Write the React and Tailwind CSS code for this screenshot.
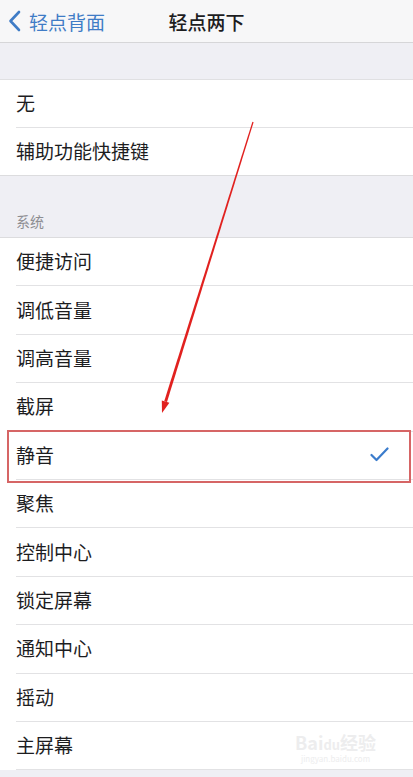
const first = ['无', '辅助功能快捷键'];
const system = ['便捷访问', '调低音量', '调高音量', '截屏', '静音', '聚焦', '控制中心', '锁定屏幕', '通知中心', '摇动', '主屏幕'];

const Row = ({ label, last, h, selected }) => (
    <div className={`relative pl-4 ${h}`}>
        <div className={`flex items-center h-full pr-6 pb-[2px] ${last ? '' : 'border-b border-[#e2e2e4]'}`}>
            <span className="text-[19px] text-[#1d1d1f] flex-1 leading-none">{label}</span>
            {selected && (
                <svg width="19" height="15" viewBox="0 0 19 15">
                    <path d="M1.5 8 L6.5 13 L17.5 1.5" fill="none" stroke="#3b7ccc" strokeWidth="2.2" strokeLinecap="round" strokeLinejoin="round" />
                </svg>
            )}
        </div>
        {selected && (
            <div className="absolute left-[7px] right-[2px] top-[-2px] bottom-[-3px] border-2 border-[#d66565]"></div>
        )}
    </div>
);

export default function App() {
    return (
        <div className="relative w-[413px] h-[777px] overflow-hidden bg-[#efeff4] font-['Noto_Sans_CJK_SC',sans-serif]">
            <div className="h-[43px] bg-[#f7f7f8] border-b border-[#d6d6d8] grid grid-cols-[1fr_auto_1fr] items-center">
                <div className="flex items-center pl-[8px] gap-[8px] text-[#3f7cc6]">
                    <svg width="13" height="22" viewBox="0 0 13 22">
                        <path d="M11 2 L2.5 11 L11 20" fill="none" stroke="#3f7cc6" strokeWidth="2.6" strokeLinecap="round" strokeLinejoin="round" />
                    </svg>
                    <span className="text-[19px] leading-none">轻点背面</span>
                </div>
                <h1 className="text-[19px] font-medium text-[#1d1d1f] leading-none">轻点两下</h1>
                <div></div>
            </div>

            <div className="h-[36px]"></div>

            <div className="bg-white border-t border-[#e0e0e2]">
                {first.map((t, i) => (
                    <Row key={t} label={t} h="h-[47.5px]" last={i === first.length - 1} />
                ))}
            </div>

            <div className="h-[62px] border-t border-[#dcdcde] flex items-end pl-4 pb-[9px]">
                <span className="text-[14px] text-[#8d8d92] leading-none">系统</span>
            </div>

            <div className="bg-white border-t border-[#dcdcde]">
                {system.map((t) => (
                    <Row key={t} label={t} h="h-[48.4px]" selected={t === '静音'} last={false} />
                ))}
            </div>

            {/* faint watermark */}
            <div className="absolute left-[295px] top-[733px] flex flex-col items-center text-[#ededee] leading-none">
                <span className="text-[18px] font-bold">Bai<span className="text-[13px]">du</span>经验</span>
                <span className="text-[8px] mt-[4px]">jingyan.baidu.com</span>
            </div>

            <svg className="absolute left-0 top-0 pointer-events-none" width="413" height="777">
                <polygon points="253.6,122.2 252.4,121.8 164.2,401.2 167.0,402.0" fill="#e1211f" />
                <polygon points="162,413 169.4,402.8 161.8,400.4" fill="#e1211f" />
            </svg>
        </div>
    );
}
